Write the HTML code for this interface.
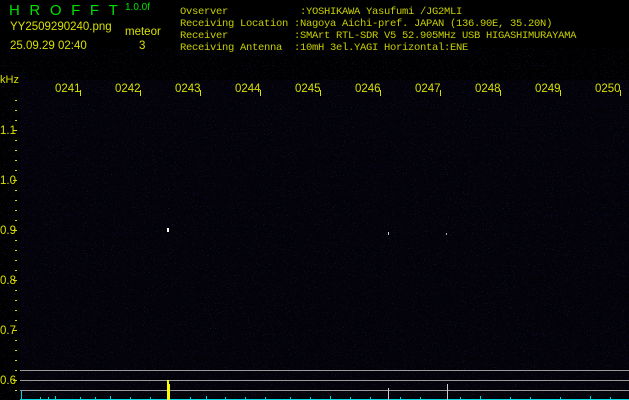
<!DOCTYPE html>
<html><head><meta charset="utf-8"><style>
body{margin:0;width:629px;height:400px;background:#000;position:relative;overflow:hidden;font-family:"Liberation Sans",sans-serif}
.t{position:absolute;white-space:pre;line-height:1}
.y{color:#d8e000;font-size:11.5px}
.m{font-family:"Liberation Mono",monospace;font-size:10.5px;color:#c8d000;letter-spacing:-0.3px}
</style></head><body>
<div class="t" style="left:9px;top:3px;color:#00e000;font-size:15px;letter-spacing:9.6px">HROFFT</div>
<div class="t" style="left:125px;top:3px;color:#00e000;font-size:10px">1.0.0f</div>
<div class="t y" style="left:10px;top:22px">YY2509290240.png</div>
<div class="t y" style="left:125px;top:27px">meteor</div>
<div class="t y" style="left:10px;top:41px">25.09.29 02:40</div>
<div class="t y" style="left:139px;top:41px">3</div>
<div class="t m" style="left:180px;top:7px">Ovserver            :YOSHIKAWA Yasufumi /JG2MLI</div>
<div class="t m" style="left:180px;top:19px">Receiving Location :Nagoya Aichi-pref. JAPAN (136.90E, 35.20N)</div>
<div class="t m" style="left:180px;top:31px">Receiver           :SMArt RTL-SDR V5 52.905MHz USB HIGASHIMURAYAMA</div>
<div class="t m" style="left:180px;top:43px">Receiving Antenna  :10mH 3el.YAGI Horizontal:ENE</div>
<div class="t" style="left:0;top:75px;color:#d8e000;font-size:11px">kHz</div>
<svg width="629" height="400" style="position:absolute;left:0;top:0">
<defs><filter id="n"><feTurbulence type="fractalNoise" baseFrequency="0.95" numOctaves="1" seed="3"/><feColorMatrix values="0 0 0 0 0.05 0 0 0 0 0.05 0 0 0 0 0.5 0 0 0 3 -1.9"/></filter></defs>
<rect x="20" y="80" width="609" height="320" fill="#020208"/>
<rect x="20" y="80" width="609" height="320" filter="url(#n)"/>
<g fill="#d8e000" font-size="11.5" font-family="Liberation Sans">
<text x="55" y="92">0241</text><text x="115" y="92">0242</text><text x="175" y="92">0243</text><text x="235" y="92">0244</text><text x="295" y="92">0245</text><text x="355" y="92">0246</text><text x="415" y="92">0247</text><text x="475" y="92">0248</text><text x="535" y="92">0249</text><text x="595" y="92">0250</text>
<text x="0" y="134">1.1</text><text x="0" y="184">1.0</text><text x="0" y="234">0.9</text><text x="0" y="284">0.8</text><text x="0" y="334">0.7</text><text x="0" y="384">0.6</text>
</g>
<g stroke="#d8e000" stroke-width="1">
<path d="M80.5 90v6M140.5 90v6M200.5 90v6M260.5 90v6M320.5 90v6M380.5 90v6M440.5 90v6M500.5 90v6M560.5 90v6M620.5 90v6"/>
<path d="M15 100.5h2M15 110.5h2M15 120.5h2M13 130.5h4M15 140.5h2M15 150.5h2M15 160.5h2M15 170.5h2M13 180.5h4M15 190.5h2M15 200.5h2M15 210.5h2M15 220.5h2M13 230.5h4M15 240.5h2M15 250.5h2M15 260.5h2M15 270.5h2M13 280.5h4M15 290.5h2M15 300.5h2M15 310.5h2M15 320.5h2M13 330.5h4M15 340.5h2M15 350.5h2M15 360.5h2M15 370.5h2M13 380.5h4M15 390.5h2"/>
</g>
<g stroke="#999" stroke-width="1"><path d="M20 370.5H629M20 380.5H629M20 390.5H629"/></g>
<rect x="20" y="399" width="609" height="1" fill="#00d8e0"/>
<path d="M21.5 391v9M40.5 397v3M48.5 397v3M55.5 396v4M80.5 397v3M95.5 397v3M110.5 396v4M130.5 397v3M150.5 397v3M190.5 397v3M206.5 396v4M225.5 397v3M245.5 397v3M265.5 397v3M290.5 397v3M310.5 397v3M330.5 396v4M350.5 397v3M370.5 397v3M400.5 397v3M420.5 397v3M460.5 397v3M480.5 396v4M510.5 397v3M530.5 397v3M560.5 397v3M590.5 396v4M610.5 397v3" stroke="#00d8e0"/>
<path d="M388.5 388v12M447.5 384v16" stroke="#ccc"/>
<rect x="167" y="380" width="2" height="20" fill="#ffff00"/><rect x="169" y="384" width="1" height="16" fill="#ffff00"/>
<rect x="167" y="228" width="2" height="4" fill="#ffffff"/>
<rect x="388" y="232" width="1" height="3" fill="#ccc"/><rect x="446" y="233" width="1" height="2" fill="#aaa"/>
</svg>
</body></html>
